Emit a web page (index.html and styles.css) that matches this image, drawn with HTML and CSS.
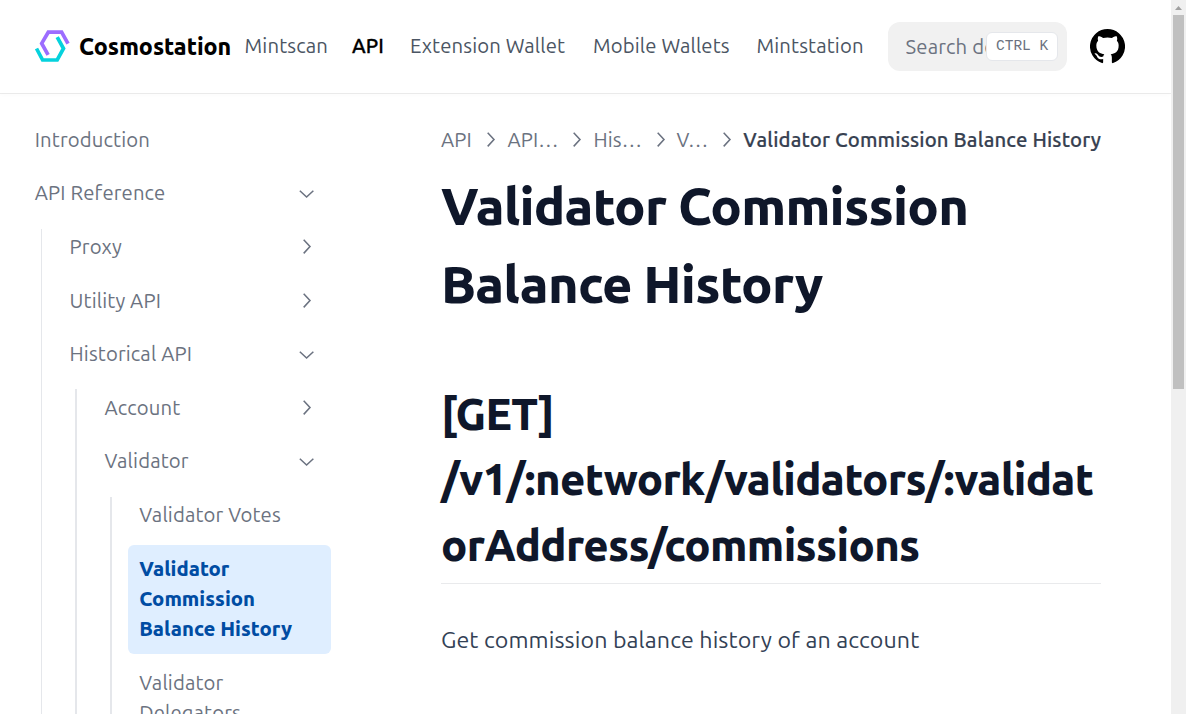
FILE: index.html
```html
<!DOCTYPE html>
<html lang="en">
<head>
<meta charset="utf-8">
<title>Validator Commission Balance History</title>
<link rel="stylesheet" href="styles.css">
</head>
<body>
<div class="page">
  <header class="header">
    <a class="brand">
      <svg class="logo" viewBox="0 0 35 34" fill="none" stroke-width="3.7">
        <path stroke="#9c6cff" d="M33 14.7 26.6 3.2H13.3L6.7 14.4l6.4 11.4"/>
        <path stroke="#05d2dd" d="M1.5 19.5 7.6 31h14.6l6.3-11.5L22.2 8.2"/>
      </svg>
      <span class="brand-name">Cosmostation</span>
    </a>
    <nav class="nav">
      <a>Mintscan</a>
      <a class="current">API</a>
      <a>Extension Wallet</a>
      <a>Mobile Wallets</a>
      <a>Mintstation</a>
    </nav>
    <div class="search"><span class="placeholder">Search do</span><kbd>CTRL K</kbd></div>
    <svg class="github" viewBox="3 3 18 18"><path d="M12 3a9 9 0 0 0-2.850 17.540c.450.080.610-.200.610-.430v-1.680c-2.500.540-3.030-1.060-3.030-1.060-.410-1.040-1-1.320-1-1.320-.820-.560.060-.550.060-.550.900.060 1.380.930 1.380.930.800 1.380 2.110.980 2.620.750.080-.580.310-.980.570-1.210-2-.230-4.100-1-4.100-4.450 0-.980.350-1.790.930-2.420-.100-.220-.410-1.140.080-2.380 0 0 .760-.240 2.480.920a8.600 8.600 0 0 1 4.500 0c1.720-1.160 2.480-.920 2.480-.920.490 1.240.180 2.160.080 2.380.580.630.930 1.440.930 2.420 0 3.460-2.110 4.220-4.110 4.440.320.280.610.830.610 1.670v2.480c0 .240.160.520.620.430A9 9 0 0 0 12 3z"/></svg>
  </header>
  <div class="body">
    <aside class="sidebar">
      <ul>
        <li><a class="row"><span>Introduction</span></a></li>
        <li><a class="row"><span>API Reference</span><svg class="chev" viewBox="0 0 24 24"><path d="M5 9l7 6.500 7-6.500"/></svg></a>
          <ul class="nested thin">
            <li><a class="row"><span>Proxy</span><svg class="chev" viewBox="0 0 24 24"><path d="M9 5l6.500 7-6.500 7"/></svg></a></li>
            <li><a class="row"><span>Utility API</span><svg class="chev" viewBox="0 0 24 24"><path d="M9 5l6.500 7-6.500 7"/></svg></a></li>
            <li><a class="row"><span>Historical API</span><svg class="chev" viewBox="0 0 24 24"><path d="M5 9l7 6.500 7-6.500"/></svg></a>
              <ul class="nested">
                <li><a class="row"><span>Account</span><svg class="chev" viewBox="0 0 24 24"><path d="M9 5l6.500 7-6.500 7"/></svg></a></li>
                <li><a class="row"><span>Validator</span><svg class="chev" viewBox="0 0 24 24"><path d="M5 9l7 6.500 7-6.500"/></svg></a>
                  <ul class="nested">
                    <li><a class="row"><span>Validator Votes</span></a></li>
                    <li><a class="row active"><span>Validator<br>Commission<br>Balance History</span></a></li>
                    <li><a class="row"><span>Validator<br>Delegators</span></a></li>
                  </ul>
                </li>
              </ul>
            </li>
          </ul>
        </li>
      </ul>
    </aside>
    <main class="main">
      <div class="crumbs">
        <span>API</span><svg class="sep" viewBox="0 0 24 24"><path d="M9 5l6.500 7-6.500 7"/></svg>
        <span>API…</span><svg class="sep" viewBox="0 0 24 24"><path d="M9 5l6.500 7-6.500 7"/></svg>
        <span>His…</span><svg class="sep" viewBox="0 0 24 24"><path d="M9 5l6.500 7-6.500 7"/></svg>
        <span>V…</span><svg class="sep" viewBox="0 0 24 24"><path d="M9 5l6.500 7-6.500 7"/></svg>
        <span class="here">Validator Commission Balance History</span>
      </div>
      <h1>Validator Commission<br>Balance History</h1>
      <h2>[GET]<br>/v1/:network/validators/:validat<br>orAddress/commissions</h2>
      <p>Get commission balance history of an account</p>
    </main>
  </div>
  <div class="scrollbar"><svg class="up" viewBox="0 0 15 15"><path d="M4 10l3.500-4 3.500 4z"/></svg><div class="thumb"></div></div>
</div>
</body>
</html>
```
FILE: styles.css
```css
* { box-sizing: border-box; }
body { margin: 0; background: #fff; font-family: Ubuntu, "Noto Sans", sans-serif; font-size: 20.3px; letter-spacing: .14px; color: #6b7280; }
.page { display: grid; grid-template: 93px 621px / 1171px 15px; height: 714px; overflow: hidden; white-space: nowrap; }
.header { display: flex; align-items: center; padding-left: 35px; box-shadow: 0 2px 4px rgba(0,0,0,.02), 0 1px 0 rgba(0,0,0,.07); }
.brand { display: flex; align-items: center; width: 209.6px; gap: 9px; padding-bottom: 2px; color: #000; }
.logo { width: 35px; height: 34px; flex: none; }
.brand-name { font-size: 23.2px; font-weight: 800; letter-spacing: -.05px; }
.nav { display: grid; grid-template-columns: 107.4px 58px 183px 163.5px 131.5px; padding-bottom: 2px; color: #4b5563; }
.current { color: #000; font-weight: 500; -webkit-text-stroke: .3px; }
.search { display: flex; align-items: center; position: relative; width: 179px; height: 49px; border-radius: 12px; background: #f1f1f1; padding-left: 17.6px; }
.placeholder { width: 83px; overflow: hidden; }
kbd { position: absolute; right: 9px; top: 10px; height: 29px; width: 72px; padding: 0 9px; border: 1px solid #e5e7eb; border-radius: 6px; background: #fff; font: 14.5px/26px "Liberation Mono", monospace; letter-spacing: 0; }
.github { width: 35px; height: 35px; margin-left: 23px; }
.body { display: flex; grid-row: 2; overflow: hidden; }
.sidebar { width: 331px; padding: 22.5px 0 0 23.2px; flex: none; }
ul { list-style: none; margin: 0; padding: 0; display: flex; flex-direction: column; gap: 5px; }
.row { display: flex; align-items: center; justify-content: space-between; padding: 9.3px 11.6px; line-height: 30px; border-radius: 6px; }
.nested { position: relative; margin: 5px 0 0 34.8px; }
.nested::before { content: ""; position: absolute; left: -17.4px; top: 6px; bottom: 6px; width: 2px; background: #e5e7eb; }
.thin::before { width: 1px; }
.active { background: #dfeeff; color: #004ca3; font-weight: 800; letter-spacing: 0; margin-top: .6px; padding: 9px 11.6px 9.8px; }
.chev, .sep { width: 23.2px; height: 23.2px; fill: none; stroke: currentColor; stroke-width: 1.6; }
.chev { margin-right: 1.6px; }
.main { width: 660px; margin-left: 110px; padding-top: 32px; }
.crumbs { display: grid; grid-template-columns: 38.1px 28.3px 58.1px 28px 55.1px 27.8px 39.1px 27.9px auto; align-items: center; line-height: 30px; }
.here { color: #374151; font-weight: 500; letter-spacing: .16px; -webkit-text-stroke: .2px; }
h1, h2 { color: #0f172a; font-weight: 800; letter-spacing: -.015em; margin: 0; }
h1 { font-size: 52.2px; line-height: 78px; margin-top: 12px; }
h2 { font-size: 43.5px; line-height: 65.4px; margin-top: 58px; height: 203px; border-bottom: 1px solid #e9eaec; }
p { font-size: 23.2px; letter-spacing: .1px; line-height: 40px; color: #334155; margin: 35px 0 0; }
.scrollbar { grid-column: 2; grid-row: 1 / 3; background: #f0f0f0; }
.up { display: block; width: 15px; height: 15px; fill: #a0a0a0; }
.thumb { width: 11px; height: 374px; margin-left: 2px; background: #c0c0c0; }
```
